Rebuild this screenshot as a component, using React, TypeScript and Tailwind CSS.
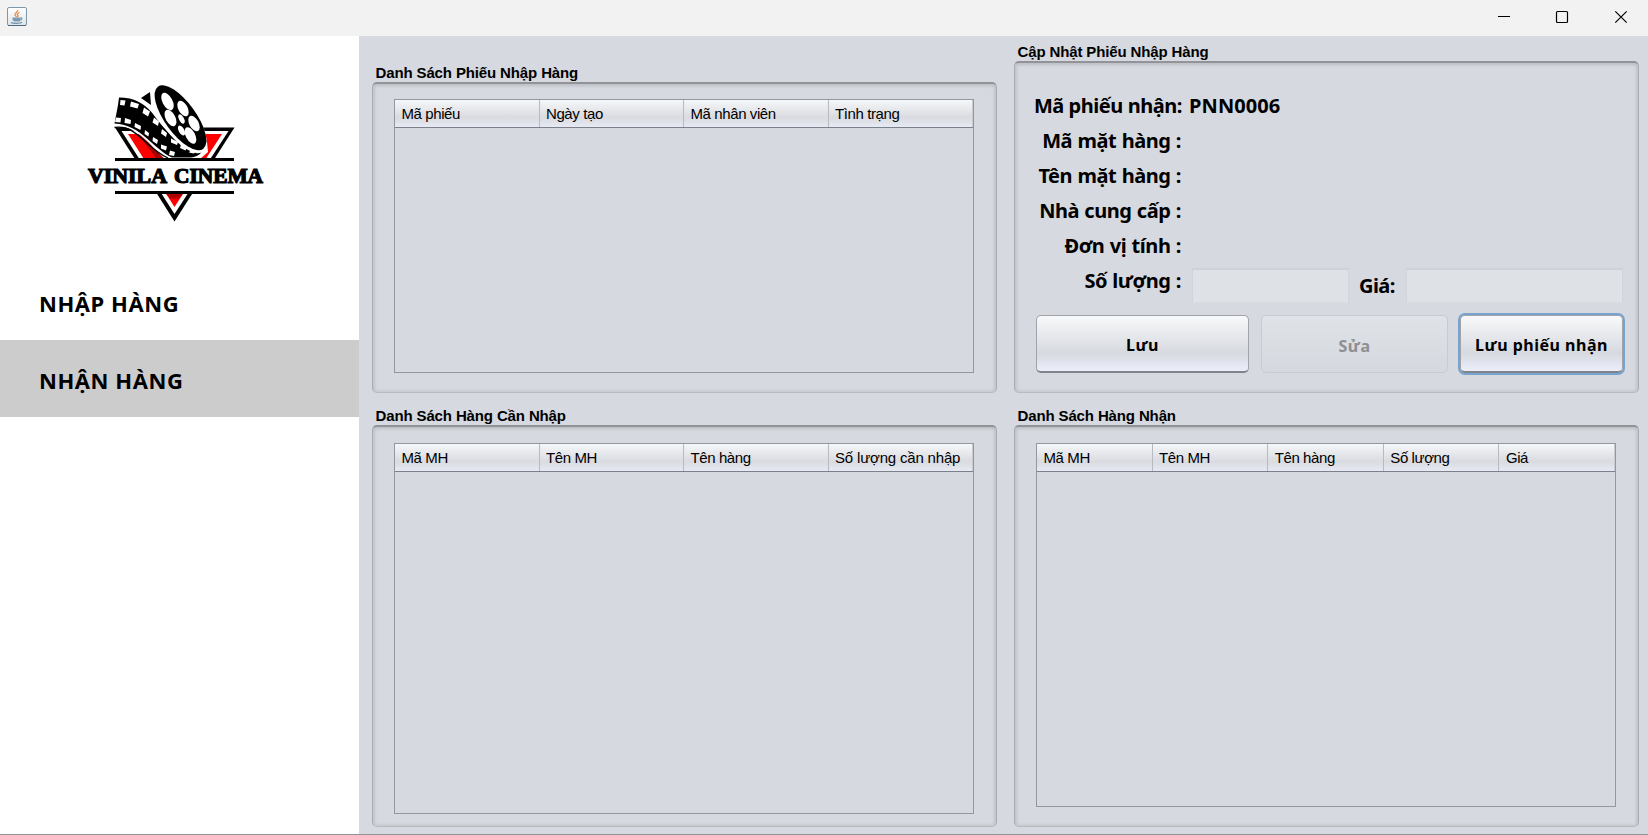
import React from "react";

const ui = "font-['Liberation_Sans',sans-serif]";
const humanist = "font-['Noto_Sans',sans-serif]";

function JavaIcon() {
  return (
    <svg width="20" height="20" viewBox="0 0 20 20">
      <defs>
        <linearGradient id="jv" x1="0" y1="0" x2="0" y2="1">
          <stop offset="0" stopColor="#ffffff" />
          <stop offset="1" stopColor="#dfe4e8" />
        </linearGradient>
      </defs>
      <rect x="0.5" y="0.5" width="19" height="18" rx="1.5" fill="url(#jv)" stroke="#7f98a9" />
      <path d="M1 18.5h18" stroke="#4d6c82" />
      <path d="M10.5 3c1 2-3.200 3-2.500 5 .3.900 1.300 1 1.300 2M12.500 5.500c-2 .8-2.800 1.700-1.700 2.700.6.7 0 1.300-.6 1.800" fill="none" stroke="#f08a3c" strokeWidth="1.300" />
      <path d="M5.500 10.500h8v1.500c0 2-1 2.500-2 2.500H8c-1.500 0-2.500-1-2.500-2.500z" fill="#7a9ab3" />
      <path d="M13.500 11c2-.5 2 1.800-.8 2.200M4 15.500c2 1.200 9 1.200 11-.2" fill="none" stroke="#6b8ea9" strokeWidth="1.100" />
    </svg>
  );
}

const reelHoles = [
  { x: 167.5, y: 101.5, rx: 5, ry: 9.500 },
  { x: 183, y: 108.5, rx: 4.6, ry: 8.500 },
  { x: 170.5, y: 118, rx: 4.8, ry: 9 },
  { x: 181.500, y: 119, rx: 2.4, ry: 5 },
  { x: 194, y: 123.500, rx: 4.6, ry: 8.500 },
  { x: 181.500, y: 130.500, rx: 2.800, ry: 5.500 },
  { x: 190.500, y: 135.500, rx: 4.6, ry: 9 },
];

function Logo() {
  return (
    <svg width="190" height="150" viewBox="80 80 190 150">
      <path d="M115 127.500H234.500L174.500 221.500Z" fill="#000" />
      <path d="M121.500 131H228.500L174.500 214Z" fill="#fff" />
      <path d="M128 134H222L174.500 207Z" fill="#f00" />
      <path d="M138 134l12 0 26 24-20 0z" fill="#a80000" />
      <path d="M166 193.500h17l-4 5h-9z" fill="#b00000" />
      <path d="M113 96C132 95 146 101 158 117C176 138 192 146 207 142L208 152L200 159H165C150 146 140 127 114 125Z" fill="#fff" />
      <path d="M119 97.500C134 97.500 146 103 156 118C172 139 187 150 202 151C200 155 196 157 191 157.500H172C153 149 142 125 114.500 123.500L118 105Z" fill="#000" />
      <path d="M114.500 127.500C137 124 145 148 168 158" fill="none" stroke="#000" strokeWidth="1.300" />
      <path
        d="M120.500 100l5 .5-1 5-4.500-.5zM131 101.500l8 2.500-1.500 4.500-7.500-2zM144 107.500l6 4-2 5-5.500-3.500zM154 117.500l5 4-1 4.500-5.500-3.500zM162 129l5 4-1 4-5-3.500zM171 138.500l7 3.500-1 3-6-2.500zM181 144.500l6 2.500-1.500 3.500-5.500-2.500zM191 149.500l5 1-2 3-5-1zM116 117.500l5 .5-.5 4.500-5.500-.5zM125 118l6 2-.5 4-6-1zM135 123l6 3-.5 4-6-3zM145 130l4 3-.5 3.500-4-2.500zM153 137l5 3-1 4-4.500-3zM161 144.500l6 2-1 4-5-2zM170 150.500l5 1.500-1 4-5-1z"
        fill="#fff"
      />
      <path d="M141 98l9-6 1 13z" fill="#000" />
      <ellipse cx="179" cy="118.500" rx="17" ry="41" transform="rotate(-36 179 118.500)" fill="#fff" />
      <ellipse cx="180.500" cy="117.800" rx="15.500" ry="38.500" transform="rotate(-36 180.500 117.800)" fill="#000" />
      {reelHoles.map((h) => (
        <ellipse key={`${h.x}-${h.y}`} cx={h.x} cy={h.y} rx={h.rx} ry={h.ry} transform={`rotate(-28 ${h.x} ${h.y})`} fill="#fff" />
      ))}
      <rect x="84" y="161" width="184" height="30" fill="#fff" />
      <rect x="115" y="158" width="119" height="3" fill="#000" />
      <rect x="115" y="191" width="119" height="3" fill="#000" />
      <g className="font-['Liberation_Serif',serif]" fontSize="20.500" fontWeight="700" fill="#000" stroke="#000" strokeWidth="1.200">
        <text x="88" y="182.700" textLength="79" lengthAdjust="spacingAndGlyphs">VINILA</text>
        <text x="174" y="182.700" textLength="89" lengthAdjust="spacingAndGlyphs">CINEMA</text>
      </g>
    </svg>
  );
}

function TitleBar() {
  return (
    <header className="flex h-9 shrink-0 items-start justify-between bg-[#f2f2f2] pl-[7px] pt-[7px]">
      <JavaIcon />
      <svg width="158" height="20" viewBox="1490 7 158 20" fill="none" stroke="#000">
        <path d="M1498 16.500h12" />
        <rect x="1556.500" y="11.500" width="11" height="11" rx="1" strokeWidth="1.200" />
        <path d="M1615.300 11.300l11.400 11.400M1626.700 11.300l-11.400 11.400" strokeWidth="1.200" />
      </svg>
    </header>
  );
}

function Panel({ title, className, children }: { title: string; className: string; children: React.ReactNode }) {
  return (
    <section className={`flex w-[625px] flex-col ${className}`}>
      <h2 className={`${ui} h-[19px] shrink-0 pl-[3.500px] text-[15px] leading-[19px] font-bold tracking-[-0.13px] whitespace-nowrap`}>{title}</h2>
      <div className="flex min-h-0 flex-1 flex-col rounded-[5px] border border-t-2 border-[#a9acb1] border-t-[#919398] border-b-[#b8bbc0] shadow-[inset_0_2px_3px_#bfc1c6,inset_2px_0_3px_#c6c8cd,inset_-2px_0_3px_#c6c8cd,inset_0_-1px_3px_#cbcdd2]">
        {children}
      </div>
    </section>
  );
}

function Table({ columns, cols, className }: { columns: string[]; cols: string; className: string }) {
  return (
    <div className={`flex w-[580px] flex-col border border-[#9297a1] ${className}`}>
      <div className={`grid h-7 shrink-0 ${cols} border-b border-[#7c808a] bg-linear-to-b from-[#f6f7f8] via-[#d9dbe0] via-65% to-[#e7eaf3]`}>
        {columns.map((c) => (
          <div
            key={c}
            className={`${ui} border-r border-[#b7bac1] pl-[6.500px] text-[15px] leading-[27px] whitespace-nowrap last:border-[#c8cbd2] ${c.length > 14 ? "tracking-[-0.18px]" : "tracking-[-0.4px]"}`}
          >
            {c}
          </div>
        ))}
      </div>
    </div>
  );
}

const buttonFace =
  "h-[58px] rounded-[5px] border border-[#a0a3a9] border-b-2 border-b-[#7f838a] bg-linear-to-b from-[#f8f9fa] via-[#d6d9df] via-68% to-[#eceffa]";

function Button({ label, className }: { label: string; className: string }) {
  return (
    <button className={`${humanist} flex items-center justify-center pt-[3px] text-[16px] font-bold tracking-[0.5px] whitespace-nowrap ${className}`}>
      {label}
    </button>
  );
}

const fields = [
  { label: "Mã phiếu nhận:", value: "PNN0006" },
  { label: "Mã mặt hàng :", value: "" },
  { label: "Tên mặt hàng :", value: "" },
  { label: "Nhà cung cấp :", value: "" },
  { label: "Đơn vị tính :", value: "" },
  { label: "Số lượng :", value: "" },
];

const inputFace = "h-[35px] border border-t-2 border-[#d1d4d8] border-t-[#cfd1d6] border-b-[#d9dce1] bg-[#dee1e6]";

function UpdateForm() {
  return (
    <div className={`${humanist} flex flex-col pt-[25px] pl-[21px] text-[20px] font-bold`}>
      {fields.map((f, i) => (
        <div key={f.label} className="flex h-[35px] items-start leading-[35px] whitespace-nowrap">
          <div className={`flex w-[146px] shrink-0 justify-end tracking-[-0.45px] ${i > 0 ? "pr-px [word-spacing:0.6px]" : ""}`}>{f.label}</div>
          {f.value && <div className="pl-[7px] tracking-[0.1px]">{f.value}</div>}
          {i === 5 && (
            <div className="flex pt-[5px] pl-[10px]">
              <div className={`${inputFace} w-[157px]`} />
              <div className="w-[57px] pl-[10px] tracking-[-0.6px]">Giá:</div>
              <div className={`${inputFace} w-[217px]`} />
            </div>
          )}
        </div>
      ))}
      <div className="flex pt-[17px]">
        <Button label="Lưu" className={`${buttonFace} w-[213px]`} />
        <Button label="Sửa" className="ml-3 h-[58px] w-[187px] rounded-[5px] border border-[#c8cbd1] bg-linear-to-b from-[#dfe2e7] to-[#d5d8de] text-[#8e8f91]" />
        <Button label="Lưu phiếu nhận" className={`${buttonFace} ml-3 w-[163px] shadow-[0_0_0_2px_#78a3ce]`} />
      </div>
    </div>
  );
}

export default function App() {
  return (
    <div className="flex h-[835px] w-[1648px] flex-col overflow-hidden bg-[#d6d9df] text-black">
      <TitleBar />
      <div className="flex min-h-0 flex-1 border-b border-[#8f9194]">
        <aside className="flex w-[359px] shrink-0 flex-col bg-white">
          <div className="h-[227px] pt-[44px] pl-[80px]">
            <Logo />
          </div>
          <nav className={`${humanist} text-[22px] font-bold tracking-[0.55px]`}>
            <div className="flex h-[77px] items-center pt-[3px] pl-[39px]">NHẬP HÀNG</div>
            <div className="flex h-[77px] items-center bg-[#cccccc] pt-[3px] pl-[39px]">NHẬN HÀNG</div>
          </nav>
        </aside>
        <main className="flex gap-[17px] pl-[13px]">
          <div className="flex flex-col">
            <Panel title="Danh Sách Phiếu Nhập Hàng" className="mt-[27px] h-[330px]">
              <Table columns={["Mã phiếu", "Ngày tạo", "Mã nhân viên", "Tình trạng"]} cols="grid-cols-4" className="mt-[15px] ml-[21px] h-[274px]" />
            </Panel>
            <Panel title="Danh Sách Hàng Cần Nhập" className="mt-[13px] h-[421px]">
              <Table columns={["Mã MH", "Tên MH", "Tên hàng", "Số lượng cần nhập"]} cols="grid-cols-4" className="mt-4 ml-[21px] h-[371px]" />
            </Panel>
          </div>
          <div className="flex flex-col">
            <Panel title="Cập Nhật Phiếu Nhập Hàng" className="mt-[6px] h-[351px]">
              <UpdateForm />
            </Panel>
            <Panel title="Danh Sách Hàng Nhận" className="mt-[13px] h-[421px]">
              <Table columns={["Mã MH", "Tên MH", "Tên hàng", "Số lượng", "Giá"]} cols="grid-cols-5" className="mt-4 ml-[21px] h-[364px]" />
            </Panel>
          </div>
        </main>
      </div>
    </div>
  );
}
